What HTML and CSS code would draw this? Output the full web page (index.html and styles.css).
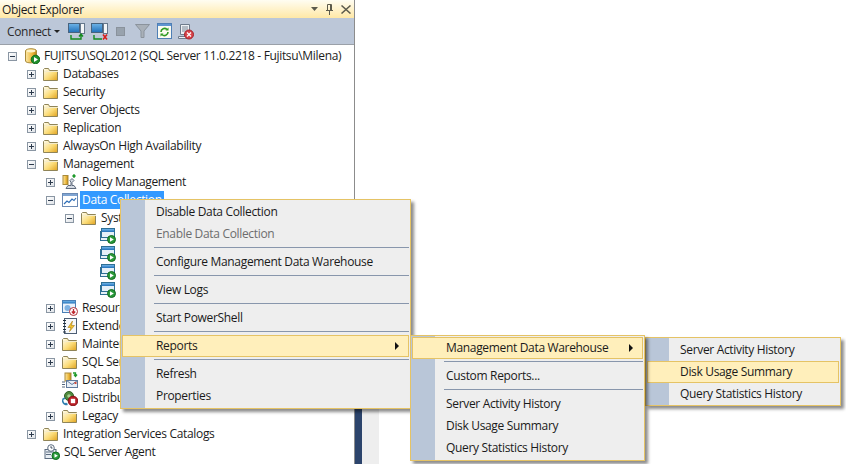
FILE: index.html
```html
<!DOCTYPE html>
<html lang="en">
<head>
  <meta charset="UTF-8">
  <title>Object Explorer</title>
  <link rel="stylesheet" href="styles.css">
</head>
<body>

  <!-- shared icons -->
  <svg class="sprite" xmlns="http://www.w3.org/2000/svg">
    <defs>
      <linearGradient id="gold" x1="0" y1="0" x2="1" y2="1">
        <stop offset="0" stop-color="#fffdf0"/>
        <stop offset="0.55" stop-color="#fbdc78"/>
        <stop offset="1" stop-color="#e0a21e"/>
      </linearGradient>
      <linearGradient id="drum" x1="0" y1="0" x2="1" y2="0">
        <stop offset="0" stop-color="#fbe8a8"/>
        <stop offset="0.6" stop-color="#eeb93c"/>
        <stop offset="1" stop-color="#b98418"/>
      </linearGradient>
      <linearGradient id="blue" x1="0" y1="0" x2="0" y2="1">
        <stop offset="0" stop-color="#6fb4e8"/>
        <stop offset="1" stop-color="#1f6fb8"/>
      </linearGradient>
      <symbol id="i-folder" viewBox="0 0 16 16">
        <path d="M.5 14.500v-11l1-1h4l1 2h8v10z" fill="url(#gold)" stroke="#8f8458"/>
        <path d="M1 5.500h14" stroke="#f4eccb" fill="none"/>
      </symbol>
      <symbol id="i-server" viewBox="0 0 16 16">
        <path d="M1.500 3c0-3 11-3 11 0v10c0 2.500-11 2.500-11 0z" fill="url(#drum)" stroke="#a98a3a"/>
        <ellipse cx="7" cy="3" rx="4.500" ry="1.400" fill="#fdf3c8"/>
        <circle cx="11.500" cy="11.500" r="4.300" fill="#1f8f2c" stroke="#0e6a1a"/>
        <path d="M10 9l4 2.500-4 2.500z" fill="#fff"/>
      </symbol>
      <symbol id="i-policy" viewBox="0 0 16 16">
        <rect x="1" y="1.500" width="5" height="9" fill="url(#drum)" stroke="#a98a3a"/>
        <path d="M4 14.500h10l-2-3h-2v-3l2-2-2-2-2 2 1 2v3H6z" fill="#d5dbe4" stroke="#5f6b7c"/>
        <path d="M12 4V1M10.500 2.500L12 .8l1.500 1.700" stroke="#1f9a2c" fill="none" stroke-width="1.300"/>
      </symbol>
      <symbol id="i-chart" viewBox="0 0 16 16">
        <rect x=".5" y="1.500" width="15" height="13" fill="#fff" stroke="#6b8ab4"/>
        <rect x="1" y="2" width="14" height="2" fill="#7fa4d2"/>
        <path d="M2 12l3-3 2 1.500L10 7l2 1.500 2-2.500" fill="none" stroke="#2f6fb8" stroke-width="1.200"/>
      </symbol>
      <symbol id="i-job" viewBox="0 0 16 16">
        <rect x=".5" y="3.500" width="12" height="9" fill="#e6f0f8" stroke="#2f6f94"/>
        <rect x="1.500" y=".5" width="13" height="9" fill="#e6f0f8" stroke="#2f6f94"/>
        <rect x="2" y="1" width="12" height="3" fill="url(#blue)"/>
        <circle cx="11.500" cy="11.500" r="4" fill="#2a9a3a" stroke="#126a20"/>
        <path d="M10 9.200l3.800 2.300-3.800 2.300z" fill="#fff"/>
      </symbol>
      <symbol id="i-resource" viewBox="0 0 16 16">
        <rect x=".5" y=".5" width="13" height="12" fill="#eaf2fb" stroke="#4a7fb5"/>
        <rect x="1" y="1" width="12" height="2.500" fill="url(#blue)"/>
        <circle cx="5.500" cy="8" r="3" fill="#7fb2e2"/>
        <circle cx="11.500" cy="11.500" r="4" fill="#fff" stroke="#b0303a"/>
        <path d="M11.500 9v4M9.800 11.500l1.700 2 1.700-2" fill="none" stroke="#c02a30" stroke-width="1.300"/>
      </symbol>
      <symbol id="i-events" viewBox="0 0 16 16">
        <rect x="2.500" y=".5" width="12" height="15" fill="#f6f8fb" stroke="#4c5e74"/>
        <path d="M1 2.500h3M1 5.500h3M1 8.500h3M1 11.500h3M1 14h3" stroke="#22303f"/>
        <path d="M10.500 3L6 9.500h3L7.500 13.500 12.500 7.500H9.500z" fill="#f3c22e" stroke="#a87e14" stroke-width=".6"/>
      </symbol>
      <symbol id="i-mail" viewBox="0 0 16 16">
        <rect x="3" y="1" width="6" height="8" fill="url(#drum)" stroke="#a98a3a"/>
        <path d="M11 1h2.500v3M15 2.500l-1.500 2-1.500-2" fill="none" stroke="#1f9a2c" stroke-width="1.300"/>
        <rect x="4.500" y="8.500" width="11" height="7" fill="#e8eef6" stroke="#5f7a9c"/>
        <path d="M4.500 8.500l5.500 4 5.500-4" fill="none" stroke="#5f7a9c"/>
        <path d="M0 10h3M0 12.500h3M0 15h3" stroke="#53657c"/>
        <rect x="12.500" y="10" width="2" height="2" fill="#d24a3a"/>
      </symbol>
      <symbol id="i-dtc" viewBox="0 0 16 16">
        <circle cx="7" cy="6" r="4.500" fill="#4f8a3e" stroke="#2f5f24"/>
        <circle cx="7" cy="6" r="1.800" fill="#a8cf92"/>
        <path d="M.5 9.500c0 3 2 5 5 5M.5 9.500L3 8M5.500 14.500L3.500 13" fill="none" stroke="#2f7fb0" stroke-width="1.500"/>
        <circle cx="11" cy="11" r="4.800" fill="#b81e26" stroke="#8a1218"/>
        <rect x="8.800" y="8.800" width="4.400" height="4.400" fill="#fff"/>
      </symbol>
      <symbol id="i-agent" viewBox="0 0 16 16">
        <rect x="1" y="5.500" width="11" height="9" fill="#e8eef4" stroke="#5c6c80"/>
        <path d="M2 8h8M2 10.500h5" stroke="#5c6c80"/>
        <circle cx="7" cy="4" r="3.300" fill="#fff" stroke="#5c6c80"/>
        <path d="M7 2.200V4h1.500" fill="none" stroke="#36495f"/>
        <circle cx="11.800" cy="11.800" r="3.800" fill="#2a9a3a" stroke="#126a20"/>
        <path d="M10.500 9.800l3.400 2-3.400 2z" fill="#fff"/>
      </symbol>
    </defs>
  </svg>

  <div class="desk">
    <div class="explorer">
      <div class="title-bar">
        <span class="title-text">Object Explorer</span>
        <span class="title-btns">
          <svg width="7" height="4" viewBox="0 0 7 4"><path d="M0 0h7L3.500 4z" fill="#5c5a4c"/></svg>
          <svg width="7" height="11" viewBox="0 0 7 11"><path d="M1.500 .5h4v6h-4zM0 6.500h7M3.500 7v4M4.500 1v5" fill="none" stroke="#5c5a4c"/></svg>
          <svg width="10" height="9" viewBox="0 0 10 9"><path d="M.5 .5l9 8M9.500 .5l-9 8" fill="none" stroke="#5c5a4c" stroke-width="1.500"/></svg>
        </span>
      </div>

      <div class="toolbar">
        <span class="connect">Connect</span>
        <svg class="caret" width="6" height="3" viewBox="0 0 6 3"><path d="M0 0h6L3 3z" fill="#222"/></svg>
        <svg class="tool tool-first" width="18" height="17" viewBox="0 0 18 17">
          <rect x=".5" y=".5" width="11" height="9" fill="url(#blue)" stroke="#47637f"/>
          <path d="M1 10.500h10v1H1z" fill="#c8cfd8"/>
          <rect x="12.500" y=".5" width="4" height="10" fill="#f4f6f8" stroke="#66788c"/>
          <path d="M3 12v4h10V12M11 13.500L13 11l2 2.500" fill="none" stroke="#138a1e" stroke-width="1.400"/>
        </svg>
        <svg class="tool" width="18" height="17" viewBox="0 0 18 17">
          <rect x=".5" y=".5" width="11" height="9" fill="url(#blue)" stroke="#47637f"/>
          <path d="M1 10.500h10v1H1z" fill="#c8cfd8"/>
          <rect x="12.500" y=".5" width="4" height="10" fill="#f4f6f8" stroke="#66788c"/>
          <path d="M3 12v4h8" fill="none" stroke="#138a1e" stroke-width="1.400"/>
          <path d="M12 11.500l4 5M16 11.500l-4 5" stroke="#d8201c" stroke-width="1.600"/>
        </svg>
        <span class="stop"></span>
        <svg class="tool tool-filter" width="15" height="14" viewBox="0 0 15 14"><path d="M.5 .5h14L9 7v6.500H6V7z" fill="#a9b0b8" stroke="#8b939c"/></svg>
        <svg class="tool tool-refresh" width="15" height="16" viewBox="0 0 15 16">
          <rect x=".5" y=".5" width="14" height="15" fill="#fbfbf2" stroke="#4f7fb5"/>
          <rect x="1" y="1" width="13" height="2" fill="#5f94d0"/>
          <path d="M4 9a3.500 3.500 0 0 1 6-2.500M11 9a3.500 3.500 0 0 1-6 2.500" fill="none" stroke="#2f9a22" stroke-width="1.600"/>
          <path d="M8.500 7.500h3v-3zM6.500 10.500h-3v3z" fill="#2f9a22"/>
        </svg>
        <svg class="tool" width="16" height="17" viewBox="0 0 16 17">
          <path d="M2.500 1.500h9v10h-9zM.5 13.500h9v2h-9z" fill="#eef1f5" stroke="#6f7c8c"/>
          <path d="M4 4h6M4 6h6M4 8h4" stroke="#7a8796"/>
          <circle cx="11" cy="11.500" r="4.500" fill="#d8434a" stroke="#a3232a"/>
          <path d="M9 9.500l4 4M13 9.500l-4 4" stroke="#fff" stroke-width="1.200"/>
        </svg>
      </div>

      <div class="tree">
        <div class="row lv0"><span class="twisty minus"></span><svg class="ico"><use href="#i-server"/></svg><span class="label">FUJITSU\SQL2012 (SQL Server 11.0.2218 - Fujitsu\Milena)</span></div>
        <div class="row lv1"><span class="twisty plus"></span><svg class="ico"><use href="#i-folder"/></svg><span class="label">Databases</span></div>
        <div class="row lv1"><span class="twisty plus"></span><svg class="ico"><use href="#i-folder"/></svg><span class="label">Security</span></div>
        <div class="row lv1"><span class="twisty plus"></span><svg class="ico"><use href="#i-folder"/></svg><span class="label">Server Objects</span></div>
        <div class="row lv1"><span class="twisty plus"></span><svg class="ico"><use href="#i-folder"/></svg><span class="label">Replication</span></div>
        <div class="row lv1"><span class="twisty plus"></span><svg class="ico"><use href="#i-folder"/></svg><span class="label">AlwaysOn High Availability</span></div>
        <div class="row lv1"><span class="twisty minus"></span><svg class="ico"><use href="#i-folder"/></svg><span class="label">Management</span></div>
        <div class="row lv2"><span class="twisty plus"></span><svg class="ico"><use href="#i-policy"/></svg><span class="label">Policy Management</span></div>
        <div class="row lv2"><span class="twisty minus"></span><svg class="ico"><use href="#i-chart"/></svg><span class="label selected">Data Collection</span></div>
        <div class="row lv3"><span class="twisty minus"></span><svg class="ico"><use href="#i-folder"/></svg><span class="label">System Data Collection Sets</span></div>
        <div class="row lv4"><span class="twisty"></span><svg class="ico"><use href="#i-job"/></svg><span class="label">Disk Usage</span></div>
        <div class="row lv4"><span class="twisty"></span><svg class="ico"><use href="#i-job"/></svg><span class="label">Query Statistics</span></div>
        <div class="row lv4"><span class="twisty"></span><svg class="ico"><use href="#i-job"/></svg><span class="label">Server Activity</span></div>
        <div class="row lv4"><span class="twisty"></span><svg class="ico"><use href="#i-job"/></svg><span class="label">Utilization</span></div>
        <div class="row lv2"><span class="twisty plus"></span><svg class="ico"><use href="#i-resource"/></svg><span class="label">Resource Governor</span></div>
        <div class="row lv2"><span class="twisty plus"></span><svg class="ico"><use href="#i-events"/></svg><span class="label">Extended Events</span></div>
        <div class="row lv2"><span class="twisty plus"></span><svg class="ico"><use href="#i-folder"/></svg><span class="label">Maintenance Plans</span></div>
        <div class="row lv2"><span class="twisty plus"></span><svg class="ico"><use href="#i-folder"/></svg><span class="label">SQL Server Logs</span></div>
        <div class="row lv2"><span class="twisty"></span><svg class="ico"><use href="#i-mail"/></svg><span class="label">Database Mail</span></div>
        <div class="row lv2"><span class="twisty"></span><svg class="ico"><use href="#i-dtc"/></svg><span class="label">Distributed Transaction Coordinator</span></div>
        <div class="row lv2"><span class="twisty plus"></span><svg class="ico"><use href="#i-folder"/></svg><span class="label">Legacy</span></div>
        <div class="row lv1"><span class="twisty plus"></span><svg class="ico"><use href="#i-folder"/></svg><span class="label">Integration Services Catalogs</span></div>
        <div class="row lv1 agent"><span class="twisty"></span><svg class="ico"><use href="#i-agent"/></svg><span class="label">SQL Server Agent</span></div>
      </div>
    </div>

    <div class="gutter">
      <div class="gutter-dark"></div>
      <div class="gutter-light"></div>
    </div>
  </div>

  <!-- context menus -->
  <div class="menu menu-main">
    <div class="item">Disable Data Collection</div>
    <div class="item disabled">Enable Data Collection</div>
    <div class="sep"></div>
    <div class="item">Configure Management Data Warehouse</div>
    <div class="sep"></div>
    <div class="item">View Logs</div>
    <div class="sep"></div>
    <div class="item">Start PowerShell</div>
    <div class="sep"></div>
    <div class="item active has-sub">Reports</div>
    <div class="sep"></div>
    <div class="item">Refresh</div>
    <div class="item">Properties</div>
  </div>

  <div class="menu menu-reports">
    <div class="item active has-sub">Management Data Warehouse</div>
    <div class="sep"></div>
    <div class="item">Custom Reports...</div>
    <div class="sep"></div>
    <div class="item">Server Activity History</div>
    <div class="item">Disk Usage Summary</div>
    <div class="item">Query Statistics History</div>
  </div>

  <div class="menu menu-mdw">
    <div class="item">Server Activity History</div>
    <div class="item active">Disk Usage Summary</div>
    <div class="item">Query Statistics History</div>
  </div>

</body>
</html>
```

FILE: styles.css
```css
body {
  margin: 0;
  background: #fff;
  font-family: "Open Sans", "Noto Sans", sans-serif;
  font-size: 12px;
  letter-spacing: -0.33px;
  color: #1c1c1c;
}

.sprite {
  display: block;
  width: 0;
  height: 0;
}

.desk {
  display: flex;
  height: 464px;
  overflow: hidden;
}

/* object explorer panel */
.explorer {
  width: 354px;
  border-right: 1px solid #8c8c8c;
  flex-shrink: 0;
}

.title-bar {
  height: 18px;
  display: flex;
  align-items: center;
  justify-content: space-between;
  padding: 0 3px 0 2px;
  background: linear-gradient(#fffdf2, #ffe8a6);
}

.title-btns {
  display: flex;
  align-items: center;
  gap: 8px;
}

.toolbar {
  height: 27px;
  display: flex;
  align-items: center;
  padding-left: 7px;
  background: #bcc7d8;
  border-bottom: 1px solid #9aa0a8;
  box-sizing: border-box;
}

.connect {
  color: #2a2a2a;
}

.caret {
  margin-left: 3px;
}

.tool-first {
  margin-left: 8px;
}

.tool {
  margin-right: 5px;
}

.stop {
  width: 9px;
  height: 9px;
  margin: 0 10px 0 2px;
  background: #98a2ad;
  border: 1px solid #8a929c;
  box-sizing: border-box;
}

.tool-filter {
  margin-right: 7px;
}

.tool-refresh {
  margin-right: 6px;
}

/* tree */
.tree {
  padding-top: 2px;
}

.row {
  height: 18px;
  display: flex;
  align-items: center;
  white-space: nowrap;
}

.lv0 { padding-left: 8px; }
.lv1 { padding-left: 27px; }
.lv2 { padding-left: 46px; }
.lv3 { padding-left: 65px; }
.lv4 { padding-left: 84px; }

.agent .ico {
  margin-left: 1px;
}

.twisty {
  width: 16px;
  height: 9px;
  flex-shrink: 0;
  position: relative;
}

.plus::before,
.minus::before {
  content: "";
  position: absolute;
  left: 0;
  top: 0;
  width: 9px;
  height: 9px;
  box-sizing: border-box;
  border: 1px solid #8a96a3;
}

.minus::before {
  background:
    linear-gradient(#2c3a4c, #2c3a4c) no-repeat 1px 3px / 5px 1px,
    linear-gradient(135deg, #fff, #dfe3e8);
}

.plus::before {
  background:
    linear-gradient(#2c3a4c, #2c3a4c) no-repeat 1px 3px / 5px 1px,
    linear-gradient(#2c3a4c, #2c3a4c) no-repeat 3px 1px / 1px 5px,
    linear-gradient(135deg, #fff, #dfe3e8);
}

.ico {
  width: 16px;
  height: 16px;
  flex-shrink: 0;
}

.label {
  margin-left: 2px;
  padding: 0 2px;
  line-height: 18px;
}

.selected {
  background: #3399ff;
  color: #fff;
}

/* strip beside the panel */
.gutter {
  display: flex;
  margin-top: 199px;
}

.gutter-dark {
  width: 7px;
  background: #2c446c;
}

.gutter-light {
  width: 17px;
  background: #eeeeee;
}

/* menus sit over the tree */
.menu {
  position: absolute;
  box-sizing: border-box;
  border: 1px solid #e5c365;
  padding: 1px 1px 1px 0;
  background: linear-gradient(90deg, #b9c6d8 24px, #eeeeee 24px);
  box-shadow: 3px 3px 3px rgba(0, 0, 0, 0.45);
  color: #1a1a1a;
}

.menu-main {
  left: 120px;
  top: 199px;
  width: 291px;
}

.menu-reports {
  left: 410px;
  top: 335px;
  width: 235px;
  z-index: 2;
}

.menu-mdw {
  left: 645px;
  top: 337px;
  width: 196px;
  padding-bottom: 0;
  z-index: 1;
  background: linear-gradient(90deg, #b9c6d8 23px, #eeeeee 23px);
}

.item {
  height: 22px;
  line-height: 21px;
  padding-left: 34px;
  margin-left: 1px;
  position: relative;
  box-sizing: border-box;
  white-space: nowrap;
}

.menu-mdw .item {
  padding-left: 33px;
}

.disabled {
  color: #6d6d6d;
}

.item.active {
  line-height: 19px;
  padding-left: 33px;
  border: 1px solid #e5c365;
  background: #ffefbb;
}

.menu-mdw .item.active {
  padding-left: 32px;
}

.has-sub::after {
  content: "";
  position: absolute;
  right: 9px;
  top: 6px;
  border-left: 4px solid #111;
  border-top: 4px solid transparent;
  border-bottom: 4px solid transparent;
}

.sep {
  height: 1px;
  margin: 2px 0 3px 33px;
  background: #8896ac;
}
```
